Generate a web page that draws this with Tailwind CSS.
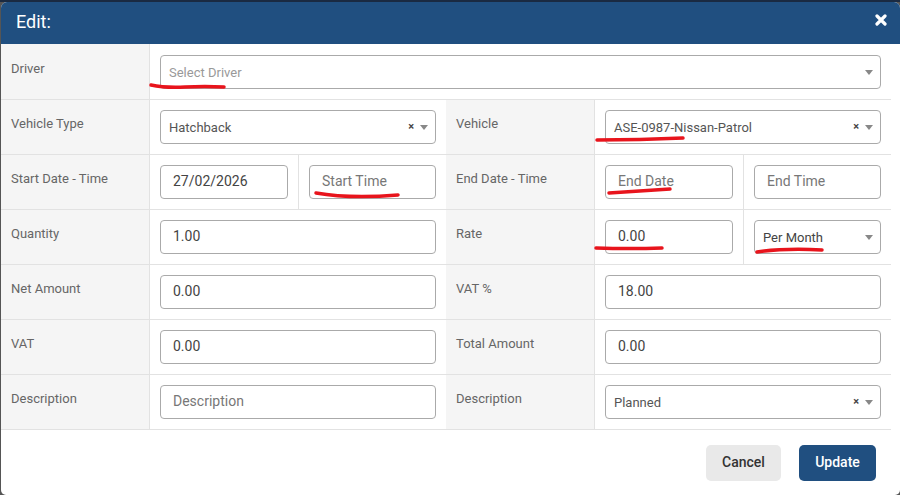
<!DOCTYPE html>
<html lang="en">
  <head>
    <meta charset="UTF-8" />
    <meta name="viewport" content="width=device-width, initial-scale=1.0" />
    <title>Edit</title>
    <script src="https://cdn.jsdelivr.net/npm/@tailwindcss/browser@4"></script>
  </head>
  <body class="bg-[#1a2a42] h-[495px] overflow-hidden font-['Roboto',sans-serif]">
    <div class="h-[495px] border-t-2 border-[#1a2a42] bg-[#555]">
      <div class="relative h-[493px] ml-[1px] bg-white rounded-t-[6px] rounded-b-[5px] overflow-hidden">
        <div class="h-[42px] bg-[#204f80] flex items-center justify-between pl-[15px] pr-[13px] text-white">
          <h2 class="text-[18px] leading-[26px] pb-[2px]">Edit:</h2>
          <svg class="w-[12px] h-[12px] mb-[7px]" viewBox="0 0 12 12"><path d="M2 2 10 10M10 2 2 10" stroke="#fff" stroke-width="3.2" stroke-linecap="round" /></svg>
        </div>

        <div class="w-[890px] grid grid-cols-[149px_296px_149px_296px] auto-rows-[55px] text-[13px] text-[#666] border-b border-[#e2e2e2]">
          <!-- driver -->
          <div class="bg-[#f5f5f5] border-r border-[#e2e2e2] pl-[10px] pt-[15px] leading-[20px]">Driver</div>
          <div class="col-span-3 px-[10px] pt-[11px]">
            <div class="h-[34px] w-[721px] border border-[#aaa] rounded-[4px] flex items-center pl-[8px] pr-[6px] justify-between">
              <span class="text-[#999] text-[13px] pt-[1px]">Select Driver</span>
              <span class="w-0 h-0 border-x-[4px] border-x-transparent border-t-[5px] border-t-[#888] mr-[1px]"></span>
            </div>
          </div>

          <!-- vehicle -->
          <div class="bg-[#f5f5f5] border-t border-r border-[#e2e2e2] pl-[10px] pt-[14px] leading-[20px]">Vehicle Type</div>
          <div class="border-t border-[#e2e2e2] px-[10px] pt-[10px]">
            <div class="h-[34px] border border-[#aaa] rounded-[4px] flex items-center pl-[8px] pr-[6px] text-[#555]">
              <span class="flex-1 pt-[1px]">Hatchback</span>
              <span class="text-[#444] text-[11px] font-bold mr-[6px] pt-[1px]">×</span>
              <span class="w-0 h-0 border-x-[4px] border-x-transparent border-t-[5px] border-t-[#888] mr-[1px]"></span>
            </div>
          </div>
          <div class="bg-[#f5f5f5] border-t border-r border-[#e2e2e2] pl-[10px] pt-[14px] leading-[20px]">Vehicle</div>
          <div class="border-t border-[#e2e2e2] px-[10px] pt-[10px]">
            <div class="h-[34px] border border-[#aaa] rounded-[4px] flex items-center pl-[8px] pr-[6px] text-[#555]">
              <span class="flex-1 pt-[1px]">ASE-0987-Nissan-Patrol</span>
              <span class="text-[#444] text-[11px] font-bold mr-[6px] pt-[1px]">×</span>
              <span class="w-0 h-0 border-x-[4px] border-x-transparent border-t-[5px] border-t-[#888] mr-[1px]"></span>
            </div>
          </div>

          <!-- dates -->
          <div class="bg-[#f5f5f5] border-t border-r border-[#e2e2e2] pl-[10px] pt-[14px] leading-[20px]">Start Date - Time</div>
          <div class="border-t border-[#e2e2e2] grid grid-cols-[149px_147px]">
            <div class="border-r border-[#e2e2e2] pl-[10px] pr-[10px] pt-[10px]">
              <input value="27/02/2026" class="w-full h-[34px] border border-[#aaa] rounded-[4px] px-[12px] text-[14px] text-[#444] pb-[2px]" />
            </div>
            <div class="pl-[10px] pr-[10px] pt-[10px]">
              <input placeholder="Start Time" class="w-full h-[34px] border border-[#aaa] rounded-[4px] px-[12px] text-[14px] pb-[2px] placeholder:text-[#777]" />
            </div>
          </div>
          <div class="bg-[#f5f5f5] border-t border-r border-[#e2e2e2] pl-[10px] pt-[14px] leading-[20px]">End Date - Time</div>
          <div class="border-t border-[#e2e2e2] grid grid-cols-[149px_147px]">
            <div class="border-r border-[#e2e2e2] pl-[10px] pr-[10px] pt-[10px]">
              <input placeholder="End Date" class="w-full h-[34px] border border-[#aaa] rounded-[4px] px-[12px] text-[14px] pb-[2px] placeholder:text-[#777]" />
            </div>
            <div class="pl-[10px] pr-[10px] pt-[10px]">
              <input placeholder="End Time" class="w-full h-[34px] border border-[#aaa] rounded-[4px] px-[12px] text-[14px] pb-[2px] placeholder:text-[#777]" />
            </div>
          </div>

          <!-- quantity / rate -->
          <div class="bg-[#f5f5f5] border-t border-r border-[#e2e2e2] pl-[10px] pt-[14px] leading-[20px]">Quantity</div>
          <div class="border-t border-[#e2e2e2] px-[10px] pt-[10px]">
            <input value="1.00" class="w-full h-[34px] border border-[#aaa] rounded-[4px] px-[12px] text-[14px] text-[#444] pb-[2px]" />
          </div>
          <div class="bg-[#f5f5f5] border-t border-r border-[#e2e2e2] pl-[10px] pt-[14px] leading-[20px]">Rate</div>
          <div class="border-t border-[#e2e2e2] grid grid-cols-[149px_147px]">
            <div class="border-r border-[#e2e2e2] pl-[10px] pr-[10px] pt-[10px]">
              <input value="0.00" class="w-full h-[34px] border border-[#aaa] rounded-[4px] px-[12px] text-[14px] text-[#444] pb-[2px]" />
            </div>
            <div class="pl-[10px] pr-[10px] pt-[10px]">
              <div class="h-[34px] border border-[#aaa] rounded-[4px] flex items-center justify-between pl-[8px] pr-[6px] text-[#444]">
                <span class="pt-[1px]">Per Month</span>
                <span class="w-0 h-0 border-x-[4px] border-x-transparent border-t-[5px] border-t-[#888] mr-[1px]"></span>
              </div>
            </div>
          </div>

          <!-- amounts -->
          <div class="bg-[#f5f5f5] border-t border-r border-[#e2e2e2] pl-[10px] pt-[14px] leading-[20px]">Net Amount</div>
          <div class="border-t border-[#e2e2e2] px-[10px] pt-[10px]">
            <input value="0.00" class="w-full h-[34px] border border-[#aaa] rounded-[4px] px-[12px] text-[14px] text-[#444] pb-[2px]" />
          </div>
          <div class="bg-[#f5f5f5] border-t border-r border-[#e2e2e2] pl-[10px] pt-[14px] leading-[20px]">VAT %</div>
          <div class="border-t border-[#e2e2e2] px-[10px] pt-[10px]">
            <input value="18.00" class="w-full h-[34px] border border-[#aaa] rounded-[4px] px-[12px] text-[14px] text-[#444] pb-[2px]" />
          </div>

          <div class="bg-[#f5f5f5] border-t border-r border-[#e2e2e2] pl-[10px] pt-[14px] leading-[20px]">VAT</div>
          <div class="border-t border-[#e2e2e2] px-[10px] pt-[10px]">
            <input value="0.00" class="w-full h-[34px] border border-[#aaa] rounded-[4px] px-[12px] text-[14px] text-[#444] pb-[2px]" />
          </div>
          <div class="bg-[#f5f5f5] border-t border-r border-[#e2e2e2] pl-[10px] pt-[14px] leading-[20px]">Total Amount</div>
          <div class="border-t border-[#e2e2e2] px-[10px] pt-[10px]">
            <input value="0.00" class="w-full h-[34px] border border-[#aaa] rounded-[4px] px-[12px] text-[14px] text-[#444] pb-[2px]" />
          </div>

          <!-- description -->
          <div class="bg-[#f5f5f5] border-t border-r border-[#e2e2e2] pl-[10px] pt-[14px] leading-[20px]">Description</div>
          <div class="border-t border-[#e2e2e2] px-[10px] pt-[10px]">
            <input placeholder="Description" class="w-full h-[34px] border border-[#aaa] rounded-[4px] px-[12px] text-[14px] pb-[2px] placeholder:text-[#777]" />
          </div>
          <div class="bg-[#f5f5f5] border-t border-r border-[#e2e2e2] pl-[10px] pt-[14px] leading-[20px]">Description</div>
          <div class="border-t border-[#e2e2e2] px-[10px] pt-[10px]">
            <div class="h-[34px] border border-[#aaa] rounded-[4px] flex items-center pl-[8px] pr-[6px] text-[#555]">
              <span class="flex-1 pt-[1px]">Planned</span>
              <span class="text-[#444] text-[11px] font-bold mr-[6px] pt-[1px]">×</span>
              <span class="w-0 h-0 border-x-[4px] border-x-transparent border-t-[5px] border-t-[#888] mr-[1px]"></span>
            </div>
          </div>
        </div>

        <div class="flex justify-end gap-[18px] pt-[15px] pr-[24px]">
          <button class="w-[75px] h-[36px] pb-[1px] bg-[#e9e9e9] text-[#333] text-[14px] font-medium rounded-[5px]">Cancel</button>
          <button class="w-[77px] h-[36px] pb-[1px] bg-[#204f80] text-white text-[14px] font-medium rounded-[5px]">Update</button>
        </div>

        <!-- red pen marks drawn over the form -->
        <svg class="absolute left-[-1px] top-[-2px] pointer-events-none" width="900" height="495" fill="none" stroke="#e8141c" stroke-width="3.5" stroke-linecap="round">
          <path d="M151 85Q165 88 185 87T224 87" />
          <path d="M597 140Q640 140 683 138" />
          <path d="M316 193Q350 199 398 195" />
          <path d="M609 193Q640 191 670 189" />
          <path d="M596 248Q630 249 662 248" />
          <path d="M757 252Q785 248 822 250" />
        </svg>
      </div>
    </div>
  </body>
</html>
